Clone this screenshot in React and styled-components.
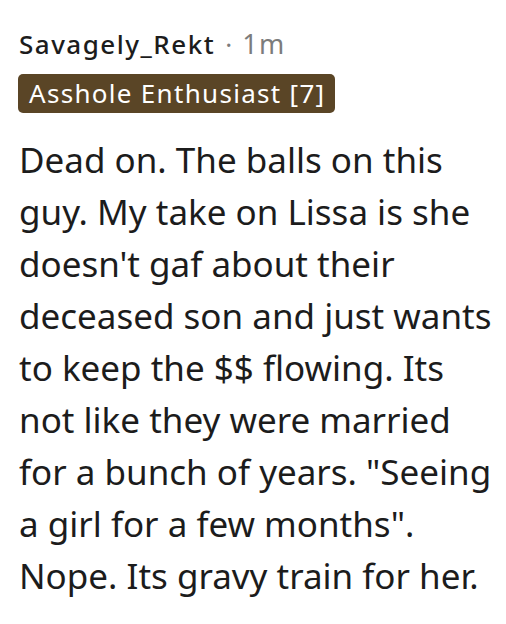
import React from "react";
import styled, { createGlobalStyle } from "styled-components";

const Global = createGlobalStyle`
  html, body { margin: 0; padding: 0; background: #ffffff; }
`;

const Comment = styled.div`
  width: 506px;
  height: 624px;
  box-sizing: border-box;
  padding: 26px 12px 0 19px;
  background: #fff;
  display: flex;
  flex-direction: column;
  align-items: flex-start;
`;

const Meta = styled.div`
  display: flex;
  align-items: baseline;
  font-family: "Noto Sans", sans-serif;
  font-size: 26px;
  line-height: 36px;
  height: 36px;
`;

const Author = styled.span`
  color: #1c1c1c;
  font-weight: 500;
  letter-spacing: 1.5px;
`;

const Dot = styled.span`
  color: #7c7c7c;
  margin: 0 10px 0 10px;
`;

const Time = styled.span`
  color: #7c7c7c;
  font-size: 27px;
  letter-spacing: 1.5px;
`;

const Flair = styled.div`
  display: flex;
  align-items: center;
  margin-top: 12px;
  margin-left: -1px;
  padding: 0 10px 0 11px;
  height: 39px;
  line-height: 39px;
  border-radius: 5px;
  background: #5a4526;
  color: #ffffff;
  font-family: "Noto Sans", sans-serif;
  font-size: 26px;
  letter-spacing: 1.3px;
`;

const Body = styled.p`
  margin: 21px 0 0 0;
  width: 100%;
  font-family: "Noto Sans", sans-serif;
  font-size: 35px;
  line-height: 52px;
  color: #1c1c1c;
`;

export default function App() {
  return (
    <>
      <Global />
      <Comment>
        <Meta>
          <Author>Savagely_Rekt</Author>
          <Dot>·</Dot>
          <Time>1m</Time>
        </Meta>
        <Flair>Asshole Enthusiast [7]</Flair>
        <Body>
          Dead on. The balls on this guy. My take on Lissa is she doesn't gaf
          about their deceased son and just wants to keep the $$ flowing. Its
          not like they were married for a bunch of years. "Seeing a girl for a
          few months". Nope. Its gravy train for her.
        </Body>
      </Comment>
    </>
  );
}
